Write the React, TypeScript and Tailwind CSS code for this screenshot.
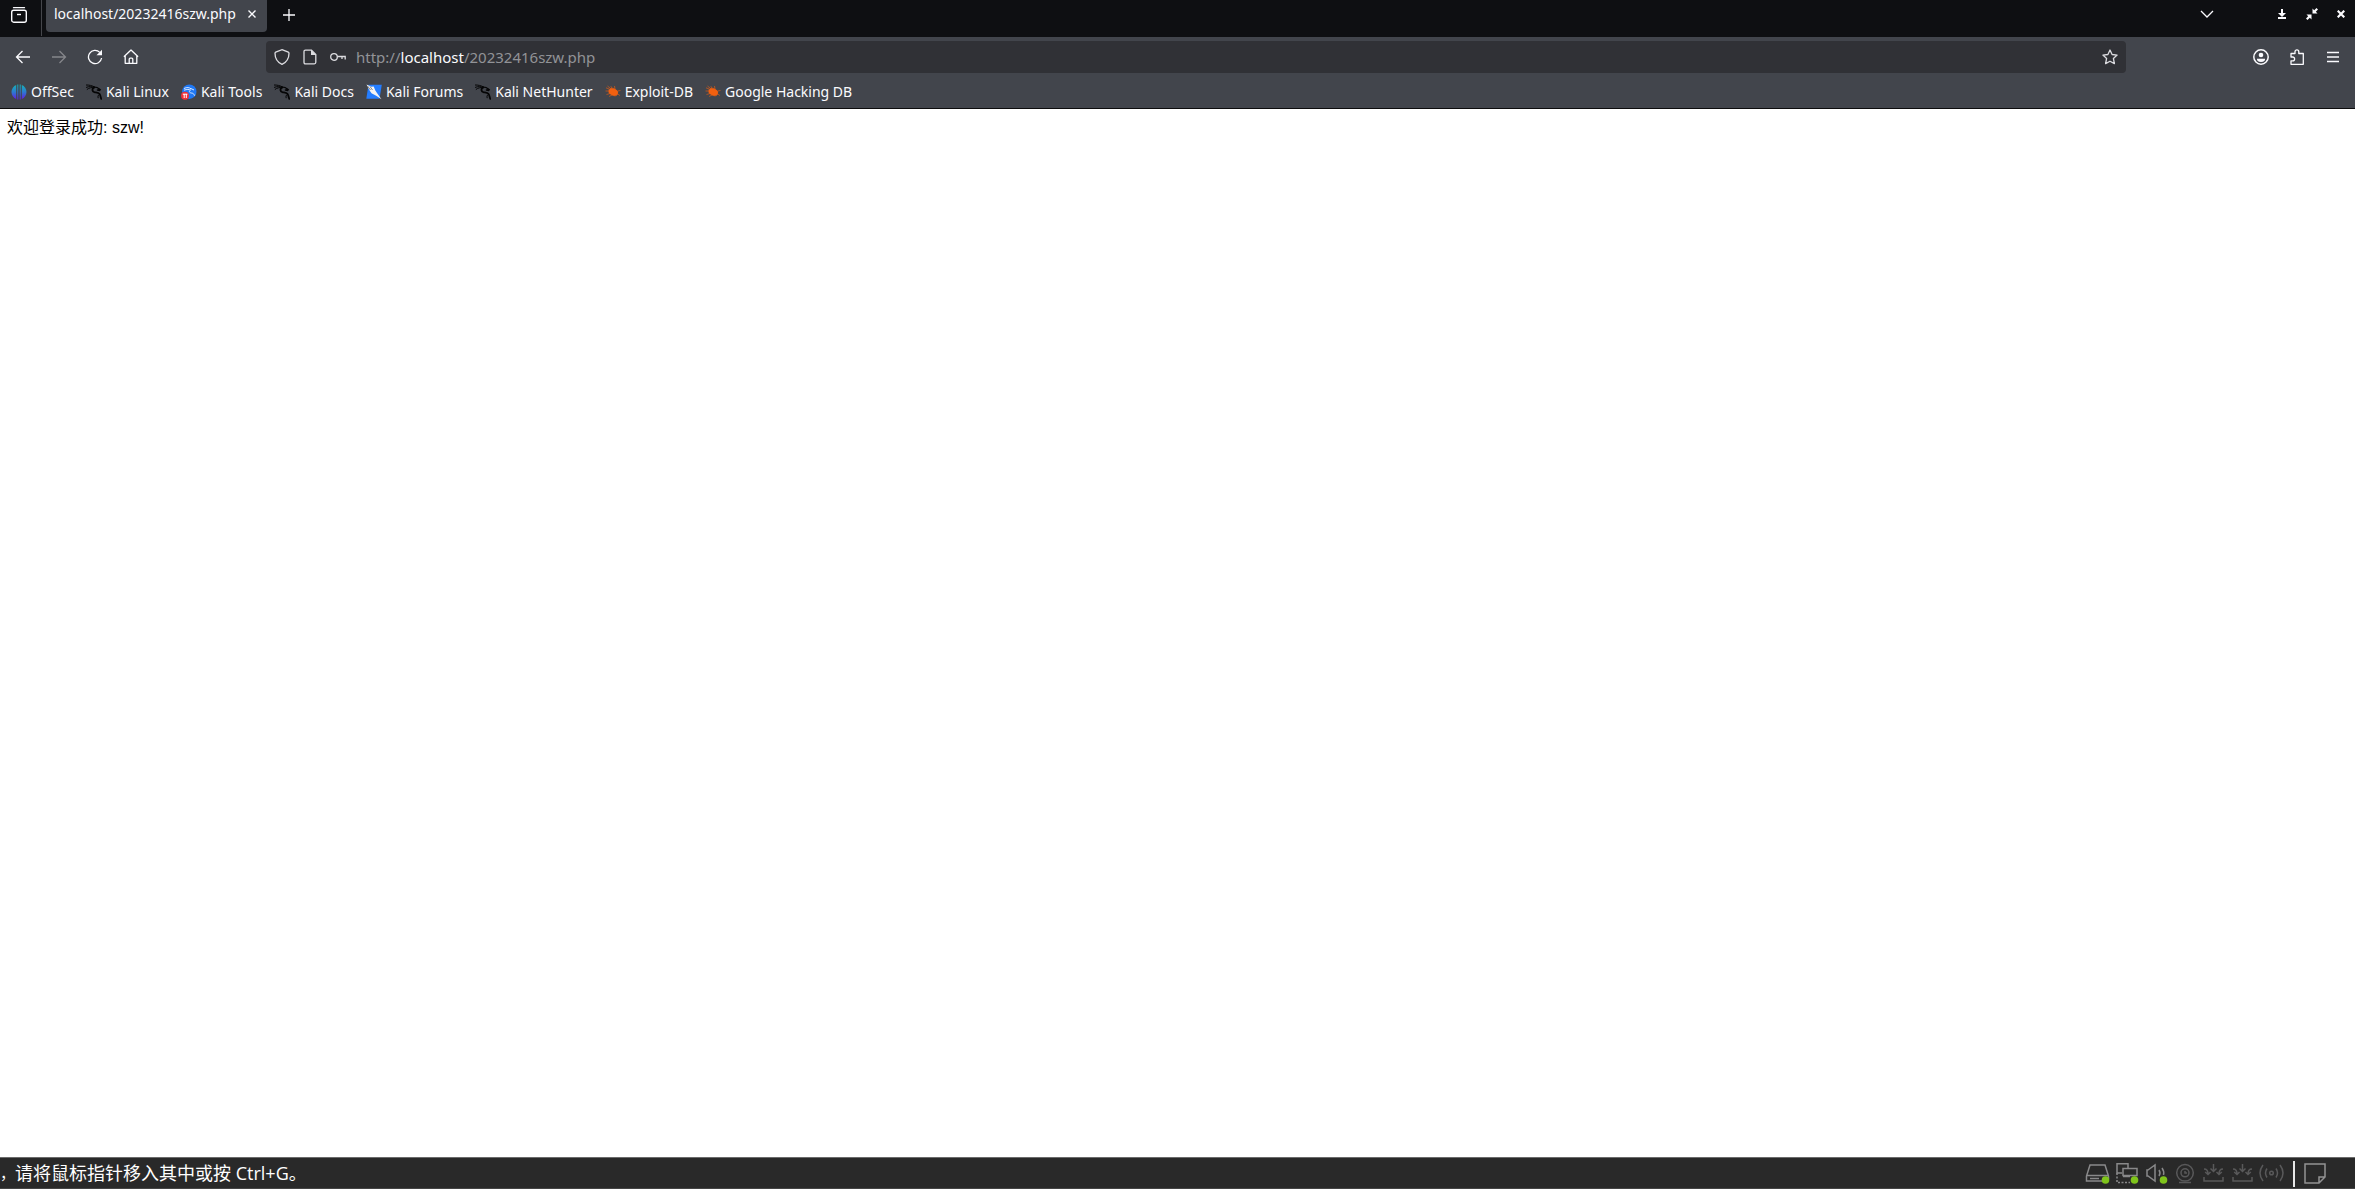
import type { ReactNode, SVGProps } from "react";

const uiFont = "font-['Noto_Sans','Noto_Sans_CJK_SC',sans-serif]";

function Icon({ size = 16, children, ...props }: { size?: number; children: ReactNode } & SVGProps<SVGSVGElement>) {
    return (
        <svg width={size} height={size} viewBox="0 0 16 16" fill="none" stroke="currentColor" strokeWidth="1.3" className="shrink-0" aria-hidden="true" {...props}>
            {children}
        </svg>
    );
}

function DragonIcon() {
    return (
        <Icon stroke="#050506" strokeWidth="1.4" strokeLinecap="round">
            <path d="M.3 1C3 .9 6 1.5 8.7 3M.4 3.3C3 2.2 6 2.4 8.5 3.6M1.2 5.3C3 3.9 5.5 3.3 8 3.6" strokeWidth="1" />
            <path d="M8 3.1c2.3-.1 3.7.2 4.7 1.6l1.5.9-.6.9-2.2-.5" />
            <path d="M7.8 3.8C5.8 5 6.1 7.5 8.3 8.1c2.4.5 4.1.3 5.3 2 1 1.4.8 3 1.7 4.8" strokeWidth="1.8" />
            <path d="M13.1 10.6c-.9.6-1.5 1.5-1 3.2" strokeWidth="1" />
        </Icon>
    );
}

function OffSecIcon() {
    return (
        <Icon stroke="none">
            <defs>
                <linearGradient id="offsec" x1="0" y1="0" x2="0" y2="1">
                    <stop offset="0" stopColor="#16b0b8" />
                    <stop offset="0.5" stopColor="#2c7bd0" />
                    <stop offset="1" stopColor="#6020e0" />
                </linearGradient>
            </defs>
            <g fill="url(#offsec)">
                <path d="M5.2 1v14C2.5 13.9 0.5 11.3 0.5 8S2.5 2.1 5.2 1z" />
                <path d="M6.3 0.6h1v14.8h-1zM8.7 0.6h1v14.8h-1z" />
                <path d="M10.8 1v14c2.7-1.1 4.7-3.7 4.7-7s-2-5.9-4.7-7z" />
            </g>
        </Icon>
    );
}

function ToolsIcon() {
    return (
        <Icon stroke="none">
            <circle cx="8.3" cy="7.7" r="7.2" fill="#1f78f5" />
            <path d="M3 4.5c3-1.5 5.500-1 7 .3M3 6.2c3-1 5-.8 6.5-.2-2 1.2-1 2.8.8 3 2 .2 2.7 1 3.2 2.7M10 4.6l3 1.4" stroke="#dbe9ff" strokeWidth="1" fill="none" />
            <circle cx="4" cy="11.8" r="4" fill="#ef3037" />
            <path d="M1.8 10.2h4.6M3.2 10v4M5.3 10v4" stroke="#fff" strokeWidth="1" />
        </Icon>
    );
}

function ForumsIcon() {
    return (
        <Icon stroke="none">
            <path d="M2.5 0.8h13.3l-2.3 14H0.3z" fill="#247dff" />
            <path d="M0.5 0.5l4.8 2.2 2.4-.1 1.5 3.7 1.8 2.7 4.5 6.3-5.3-3.5-4.7-2.6L3.3 6z" fill="#f4f4f4" />
            <path d="M1.5 2l3 4M4 2.5L6.5 6" stroke="#555" strokeWidth="0.7" />
        </Icon>
    );
}

function BugIcon() {
    return (
        <Icon stroke="#f2600f" strokeWidth="0.6">
            <ellipse cx="8.3" cy="8" rx="4.8" ry="3.3" transform="rotate(25 8.3 8)" fill="#f2600f" />
            <path d="M4 5L1 3.8M5 4L2.5 2M7 4L5.8 2.2M10 5l-.5-3M12.5 7l3-.5M3.5 7h-3M5 9.5l-3.5 1M7 11l-3 1.5M12.5 10l2.5 1.5" />
        </Icon>
    );
}

const bookmarks = [
    { name: "OffSec", icon: <OffSecIcon /> },
    { name: "Kali Linux", icon: <DragonIcon /> },
    { name: "Kali Tools", icon: <ToolsIcon /> },
    { name: "Kali Docs", icon: <DragonIcon /> },
    { name: "Kali Forums", icon: <ForumsIcon /> },
    { name: "Kali NetHunter", icon: <DragonIcon /> },
    { name: "Exploit-DB", icon: <BugIcon /> },
    { name: "Google Hacking DB", icon: <BugIcon /> },
];

function IconButton({ label, className = "w-9 h-8", children }: { label: string; className?: string; children: ReactNode }) {
    return (
        <button type="button" aria-label={label} className={`flex shrink-0 items-center justify-center ${className}`}>
            {children}
        </button>
    );
}

function TabBar() {
    return (
        <div className="flex h-[37px] bg-[#0e0f12] text-[#fbfbfe]">
            <div className="flex h-9 w-[42px] shrink-0 border-r border-[#45464b] pl-[3px]">
                <IconButton label="View recent browsing" className="h-[30px] w-8">
                    <Icon>
                        <path d="M2.5 0.7h11" strokeLinecap="round" />
                        <rect x="0.7" y="3.2" width="14.6" height="12" rx="2" strokeWidth="1.4" />
                        <path d="M6 7.5h4" strokeWidth="1.4" />
                    </Icon>
                </IconButton>
            </div>
            <div className="ml-1 flex h-8 w-[221px] items-center rounded-b bg-[#42454c] pb-1 pl-2">
                <span className="flex-1 whitespace-nowrap text-[14px] leading-5">localhost/20232416szw.php</span>
                <IconButton label="Close tab" className="h-6 w-8">
                    <Icon size={8} viewBox="0 0 8 8" strokeWidth="1.4"><path d="M0.5 0.5l7 7M7.5 0.5l-7 7" /></Icon>
                </IconButton>
            </div>
            <IconButton label="Open a new tab" className="ml-1 h-[30px] w-9">
                <Icon size={12} viewBox="0 0 12 12"><path d="M6 0v12M0 6h12" /></Icon>
            </IconButton>
            <div className="ml-auto flex">
                <IconButton label="List all tabs" className="mr-[42px] h-[27px] w-9">
                    <Icon size={14} viewBox="0 0 14 14"><path d="M1 4l6 6 6-6" /></Icon>
                </IconButton>
                <IconButton label="Minimize" className="h-7 w-[30px]">
                    <Icon size={10} viewBox="0 0 10 10" stroke="none" fill="currentColor"><path d="M4 0h2v4h3L5 8 1 4h3zM1 8h8v2H1z" /></Icon>
                </IconButton>
                <IconButton label="Restore" className="h-7 w-[30px]">
                    <Icon size={12} viewBox="0 0 12 12" stroke="none" fill="currentColor"><path d="M6.500 0.5v5h5L9.8 3.8 12 1.5 10.5 0 8.2 2.2zM5.5 11.5v-5h-5l1.7 1.7L0 10.5 1.5 12l2.3-2.2z" /></Icon>
                </IconButton>
                <IconButton label="Close" className="h-7 w-7">
                    <Icon size={8} viewBox="0 0 8 8" strokeWidth="2.2"><path d="M0.7 0.7l6.6 6.6M7.3 0.7L0.7 7.3" /></Icon>
                </IconButton>
            </div>
        </div>
    );
}

function NavBar() {
    return (
        <div className="flex h-10 items-center pl-[5px] pr-1">
            <IconButton label="Go back">
                <Icon><path d="M15 8H1.5M7.5 2l-6 6 6 6" /></Icon>
            </IconButton>
            <IconButton label="Go forward" className="h-8 w-9 text-[#85868b]">
                <Icon><path d="M1 8h13.5M8.5 2l6 6-6 6" /></Icon>
            </IconButton>
            <IconButton label="Reload">
                <Icon>
                    <path d="M12.8 3.4A6.6 6.6 0 1 0 14.6 9" />
                    <path d="M15 0.8v5.5H9.5z" fill="currentColor" stroke="none" />
                </Icon>
            </IconButton>
            <IconButton label="Home">
                <Icon>
                    <path d="M0.9 7.8L8 1l7.1 6.8M2.2 6.7v7.6h11.6V6.7" strokeLinejoin="round" />
                    <path d="M6.2 14v-3.8q0-1 1-1h1.6q1 0 1 1V14" />
                </Icon>
            </IconButton>
            <div className="w-[117px] shrink" />
            <div className="flex h-8 min-w-0 flex-1 items-center rounded bg-[#303136] pl-[2px] text-[#dcdce0]">
                <IconButton label="Tracking protection" className="h-7 w-7">
                    <Icon><path d="M8 0.7l6.3 2.5q.7.3.7 1C15 9.5 12 13.5 8 15.3 4 13.5 1 9.5 1 4.2q0-.7.7-1z" /></Icon>
                </IconButton>
                <IconButton label="Site information" className="h-7 w-7">
                    <Icon>
                        <path d="M3.5 1.2h6l4.3 4.3v7.8q0 1.5-1.5 1.5H3.5Q2 14.8 2 13.3V2.7q0-1.5 1.5-1.5z" />
                        <path d="M9 1v5h5z" fill="currentColor" stroke="none" />
                    </Icon>
                </IconButton>
                <IconButton label="Saved logins" className="h-7 w-7">
                    <Icon><circle cx="4" cy="8" r="3.3" /><path d="M7.3 7.5h8.5M15.2 7.5v3M12 7.5V10" /></Icon>
                </IconButton>
                <div role="textbox" aria-label="Address" className="ml-1 flex-1 whitespace-nowrap text-[15px] leading-5 text-[#929397]">
                    http://<span className="text-[#fbfbfe]">localhost</span>/20232416szw.php
                </div>
                <IconButton label="Bookmark this page" className="h-7 w-8">
                    <Icon strokeLinejoin="round"><path d="M8 1l2.1 4.5 5 .6-3.7 3.4 1 5.1L8 12.2l-4.4 2.4 1-5.1L0.9 6.1l5-.6z" /></Icon>
                </IconButton>
            </div>
            <div className="w-[117px] shrink" />
            <IconButton label="Account">
                <Icon strokeWidth="1.5">
                    <circle cx="8" cy="8" r="7.2" />
                    <circle cx="8" cy="6" r="2.3" fill="currentColor" stroke="none" />
                    <path d="M4 9.7h8q.5 2.8-4 3.3-4.5-.5-4-3.3z" fill="currentColor" stroke="none" />
                </Icon>
            </IconButton>
            <IconButton label="Extensions">
                <Icon>
                    <path d="M2 6V4.500h4V2.8a1.9 1.9 0 0 1 3.8 0v1.7h4.5v10.8H2v-3.5h1.7a1.9 1.9 0 0 0 0-3.8H2z" strokeLinejoin="round" />
                </Icon>
            </IconButton>
            <IconButton label="Open application menu">
                <Icon size={12} viewBox="0 0 12 12"><path d="M0 1.5h12M0 6h12M0 10.5h12" /></Icon>
            </IconButton>
        </div>
    );
}

function BookmarksBar() {
    return (
        <nav className="flex h-[31px] items-center pb-px pl-[5px]">
            {bookmarks.map((b) => (
                <a key={b.name} href="#" className="flex items-center gap-1 whitespace-nowrap px-1.5 text-[14px] leading-5">
                    {b.icon}
                    {b.name}
                </a>
            ))}
        </nav>
    );
}

// device symbols of the virtual machine window, green dot = connected
function Device({ label, active, children }: { label: string; active?: boolean; children: ReactNode }) {
    return (
        <button type="button" aria-label={label} className={active ? "text-[#89898a]" : "text-[#59595a]"}>
            <svg width="29" height="22" viewBox="0 0 29 22" fill="none" stroke="currentColor" strokeWidth="1.5" aria-hidden="true">
                {children}
                {active && <circle cx="21.5" cy="17" r="3.8" fill="#7fc41c" stroke="none" />}
            </svg>
        </button>
    );
}

function DownloadTray() {
    return <path d="M4 14v4h19v-4M13.5 1v7M10.5 5.5l3 3 3-3M4 6q4 0 4 5M5.2 9L8 11.5 10.5 9M23 6q-4 0-4 5M16.5 9l2.5 2.5L21.8 9" />;
}

function StatusBar() {
    return (
        <footer className="flex h-8 items-center border-b border-t border-b-[#454545] border-t-[#6b6b6b] bg-[#292929]">
            <p className="flex flex-1 items-center whitespace-nowrap font-['Open_Sans','Noto_Sans_CJK_SC',sans-serif] text-[18px] leading-7 text-white">
                <span className="text-[15px]">，</span>
                <span>请将鼠标指针移入其中或按 Ctrl+G。</span>
            </p>
            <div className="flex items-center pr-7 pt-0.5">
                <Device label="Hard disk" active>
                    <path d="M18 18H2.5v-5L6 2h15l3.5 11v3M2.5 12.5h22M6 15.5h9" />
                </Device>
                <Device label="Network adapter" active>
                    <path d="M4 5.5V0.8h11v4M4 0.8V10h5M10 10.500V5.5h14v7H10zM10 13.5h7" />
                    <path d="M4 10v9.5h13" strokeDasharray="2 1.5" />
                </Device>
                <Device label="Sound card" active>
                    <path d="M6 7l7-5v16l-7-5H5V7zM17 7q2 3 0 6M20 5q2.500 3.500 1.500 7" />
                </Device>
                <Device label="Camera">
                    <circle cx="14" cy="9.8" r="8.3" />
                    <circle cx="14" cy="9.8" r="4" />
                    <path d="M14 8v2h2M8 19.5h12" />
                </Device>
                <Device label="USB device"><DownloadTray /></Device>
                <Device label="Second USB device"><DownloadTray /></Device>
                <Device label="Wireless">
                    <circle cx="13.5" cy="10" r="1.8" />
                    <path d="M9 5.5q-3 4.5 0 9M18 5.5q3 4.5 0 9M5 2q-6 8 0 16M22 2q6 8 0 16" />
                </Device>
                <div className="mx-[6px] h-[26px] w-[2px] bg-[#e8e8e8]" />
                <button type="button" aria-label="Messages" className="ml-[2px] text-[#929293]">
                    <svg width="24" height="22" viewBox="0 0 24 22" fill="none" stroke="currentColor" strokeWidth="1.5" aria-hidden="true">
                        <path d="M2 1h20v13l-6 6H2zM16 20v-6h6" />
                    </svg>
                </button>
            </div>
        </footer>
    );
}

export default function App() {
    return (
        <div className={`flex min-h-screen flex-col bg-white ${uiFont}`}>
            <header className="border-b border-[#0c0c0d] bg-[#42454c] text-[#fbfbfe]">
                <TabBar />
                <NavBar />
                <BookmarksBar />
            </header>
            <main className="flex-1 px-[7px] py-2 font-['Liberation_Sans','Noto_Sans_CJK_SC',sans-serif] text-base leading-[22px] text-black">
                欢迎登录成功: szw!
            </main>
            <StatusBar />
        </div>
    );
}
